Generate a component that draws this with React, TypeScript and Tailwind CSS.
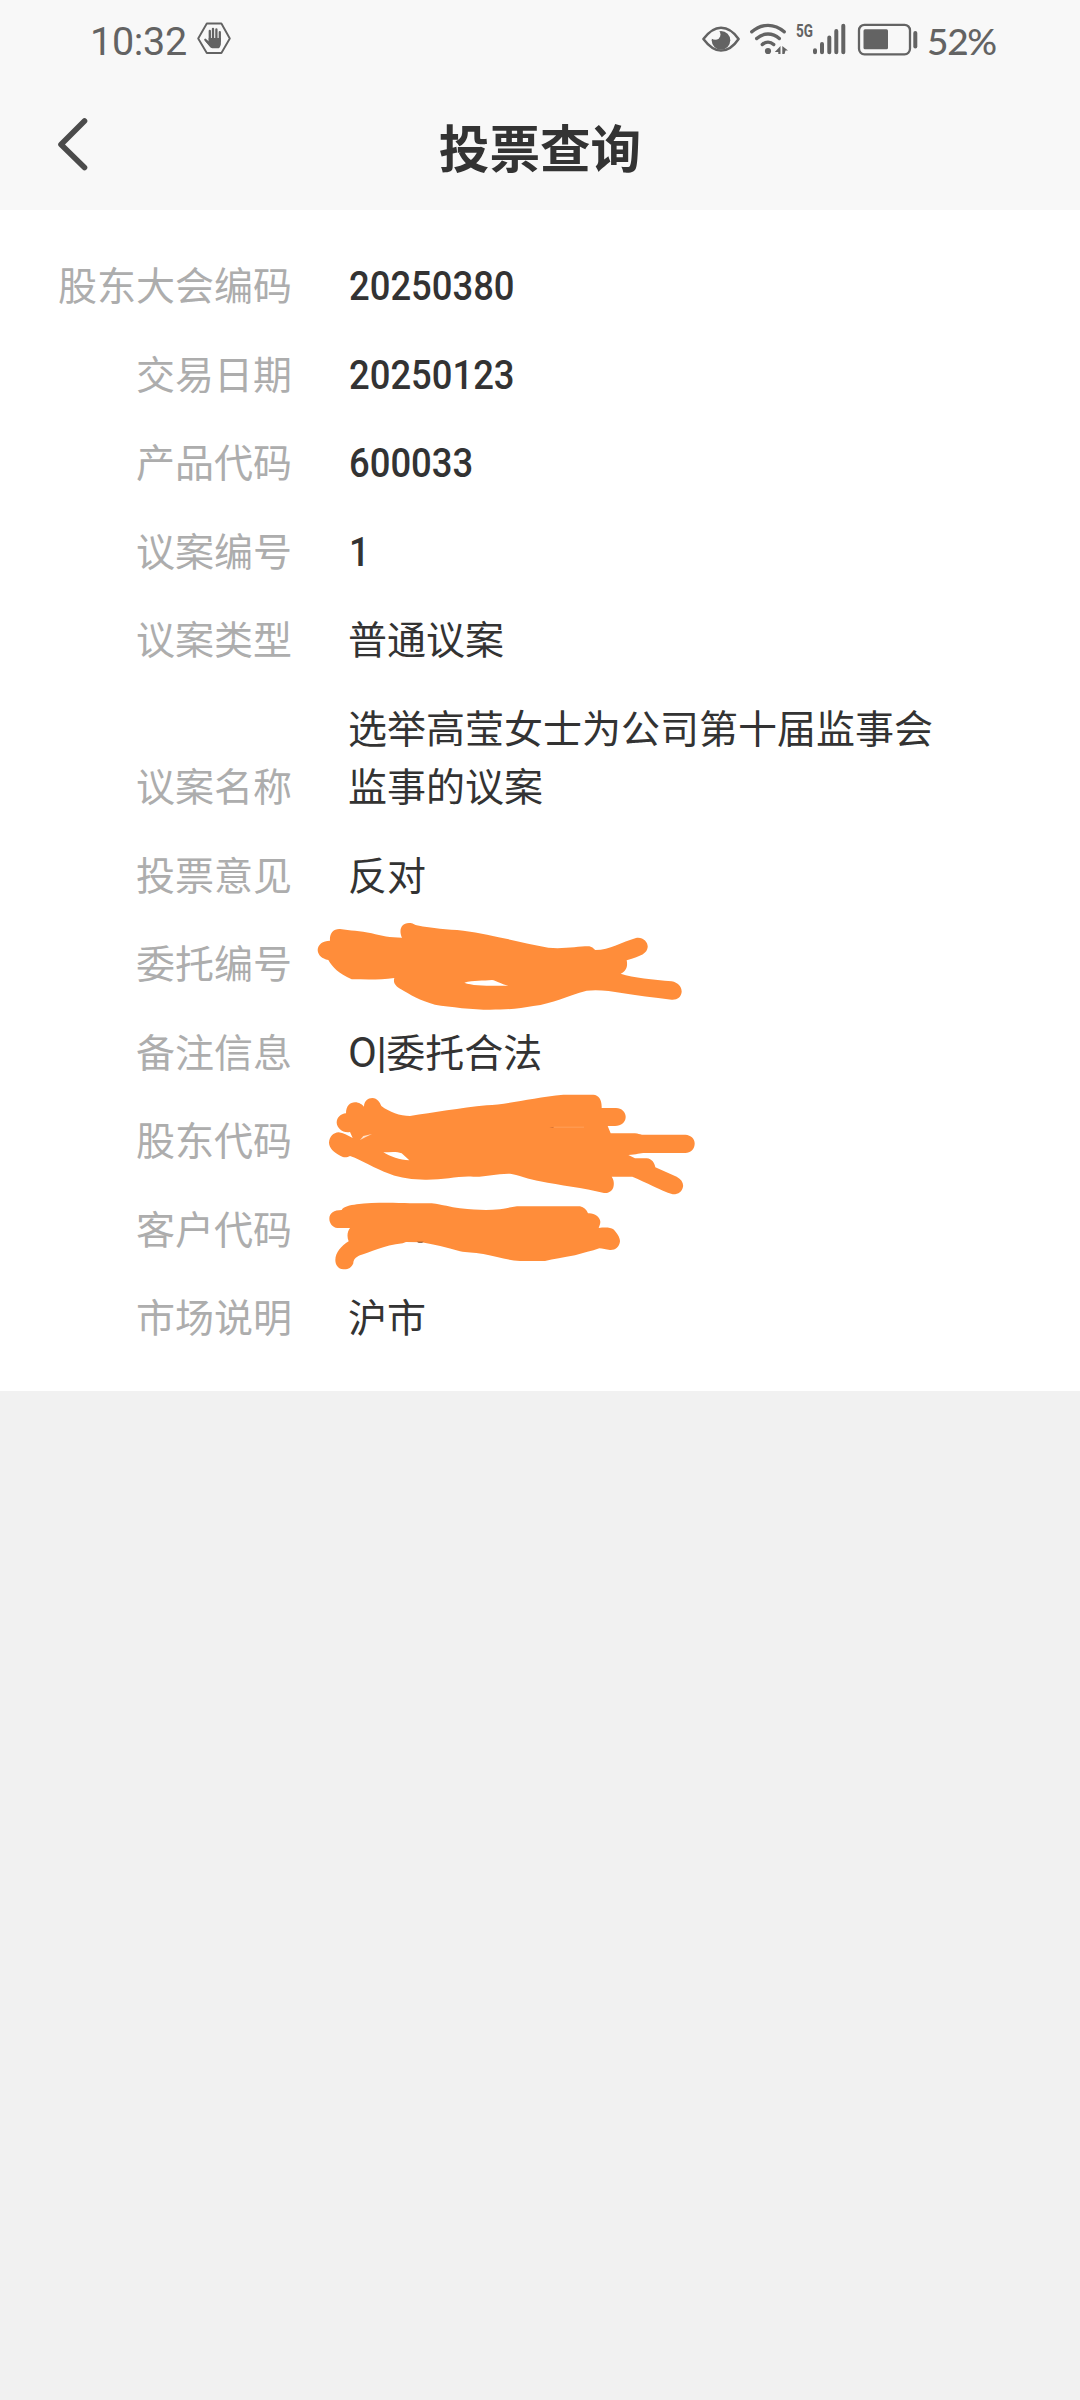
import React from 'react';

interface Row {
  label: string;
  value?: string;
  prefix?: string;
  numeric?: boolean;
}

const rows: Row[] = [
  { label: '股东大会编码', value: '20250380', numeric: true },
  { label: '交易日期', value: '20250123', numeric: true },
  { label: '产品代码', value: '600033', numeric: true },
  { label: '议案编号', value: '1', numeric: true },
  { label: '议案类型', value: '普通议案' },
  { label: '议案名称', value: '选举高莹女士为公司第十届监事会监事的议案' },
  { label: '投票意见', value: '反对' },
  { label: '委托编号' },
  { label: '备注信息', prefix: 'O|', value: '委托合法' },
  { label: '股东代码' },
  { label: '客户代码' },
  { label: '市场说明', value: '沪市' },
];

function HandIcon() {
  return (
    <svg className="-mt-[3px] ml-[9px] h-[33px] w-[34px]" viewBox="0 0 34 33" fill="none">
      <path d="M9.800 1.500h14.600L32.800 16.500l-8.400 14.500H9.800L1.200 16.500z" stroke="#636363" strokeWidth="1.900" strokeLinejoin="round" />
      <g stroke="#636363" strokeLinecap="round" strokeWidth="2.300">
        <path d="M12.800 9V19M16 6.800V18M19.400 7.500V18M22.800 10.200V19" />
        <path d="M8.300 17.800L12.500 22" />
      </g>
      <path d="M11.700 16h12.200v5.700c0 1.500-.6 2.400-1 3.200c-.4.800-1 1.300-2 1.300h-5.500c-1.200 0-2-.6-2.600-1.400L8.300 19.200l2-.6 1.400 1z" fill="#636363" />
    </svg>
  );
}

function StatusIcons() {
  return (
    <svg className="h-[40px] w-[220px]" viewBox="0 0 220 40" fill="none">
      {/* eye */}
      <circle cx="21" cy="20.300" r="9.300" fill="#636363" />
      <circle cx="15.300" cy="14.500" r="5.200" fill="#f8f8f8" />
      <path d="M3.400 19C9 11.500 15 7.700 21 7.700S33.500 11.500 38.600 19C33.500 26.500 27 30.600 21 30.600S9 26.500 3.400 19z" stroke="#636363" strokeWidth="2.500" strokeLinejoin="round" />
      {/* wifi */}
      <g stroke="#636363" strokeWidth="3.400" strokeLinecap="round">
        <path d="M51.800 11.800C61.500 3.200 74.500 3.200 84.200 11.800" />
        <path d="M56.700 18.500C63.500 12.400 72.500 12.400 79.300 18.500" />
        <path d="M62.300 24.500C65.800 21.300 70.200 21.300 73.700 24.500" />
      </g>
      <circle cx="68" cy="31" r="3.100" fill="#636363" />
      <path d="M80.500 26V34h-2.200V32h-3.500zM82.300 26L88 30.500H85.500L84.500 34h-2.200z" fill="#636363" />
      {/* signal */}
      <g stroke="#636363" strokeWidth="4" strokeLinecap="round">
        <path d="M115 30.300V32.200M122 24V32.200M129.300 17.500V32.200M136.300 11V32.200M143.300 5.700V32.200" />
      </g>
      {/* battery */}
      <rect x="159" y="4.800" width="51" height="29.500" rx="5.500" stroke="#636363" strokeWidth="2.300" />
      <rect x="163.500" y="9.300" width="24.500" height="20" rx="1.500" fill="#636363" />
      <path d="M215.300 13V26.500" stroke="#636363" strokeWidth="4" strokeLinecap="round" />
    </svg>
  );
}

// Marker strokes covering the private values
function Scribbles() {
  return (
    <>
      <svg className="absolute left-[300px] top-[690px] h-[130px] w-[420px]" viewBox="0 0 1260 390" fill="#ff8d3a">
        <path
          fillRule="evenodd"
          d="M53 150C54 133 68 122 90 122C88 100 100 86 120 87C150 92 180 92 215 100C245 108 270 113 306 113C296 92 302 70 327 69C340 69 342 74 350 76C400 86 440 88 490 92C580 104 660 128 745 143C790 148 840 138 868 139C878 141 880 146 886 150C930 150 965 126 1008 114C1030 110 1045 128 1043 142C1041 160 1025 168 980 181C984 200 978 214 962 221C1000 234 1060 238 1115 244C1135 248 1146 262 1145 276C1143 292 1132 300 1115 299C1060 293 1010 286 965 279C930 272 890 268 860 272C800 288 760 310 700 318C660 326 620 329 570 329C520 329 450 321 405 314C360 302 330 284 303 268C285 258 279 248 283 234C240 240 200 238 155 238C115 220 98 202 85 180C66 176 54 166 53 150ZM493 248C520 240 550 243 576 240C590 242 602 252 625 257C580 257 520 259 493 248Z"
        />
      </svg>
      <svg className="absolute left-[300px] top-[860px] h-[220px] w-[420px]" viewBox="0 0 1260 660" fill="#ff8d3a">
        <path
          fillRule="evenodd"
          d="M110 158C110 142 122 132 138 130C138 108 150 97 165 97C178 97 186 104 192 110C192 94 204 84 217 84C232 84 240 98 244 108C268 126 300 138 330 138C400 128 480 114 560 106C620 104 700 82 790 74H880C896 75 906 88 905 114H948C966 114 978 128 977 142C976 158 964 168 945 168H923L932 190H1005C1015 190 1018 194 1026 194H1156C1174 195 1185 208 1184 222C1183 238 1172 249 1156 249H1035C1020 249 1010 254 985 255L1005 265H1040C1056 266 1064 280 1066 292L1130 320C1145 328 1151 340 1149 350C1147 364 1134 374 1118 373C1080 360 1040 338 997 320H935C942 330 942 340 941 347C939 362 926 370 912 369C850 354 780 346 720 334C690 328 650 314 630 311C590 310 560 321 520 320C480 316 430 330 375 329C340 329 300 324 270 312C220 294 190 272 150 258C142 262 132 264 122 258C100 246 88 234 87 218C88 200 100 188 116 187C130 188 142 196 158 204L150 186C128 190 111 174 110 158ZM250 247C270 247 290 244 305 250L328 271C300 270 270 260 250 247Z"
        />
        <path d="M180 210L190 198L216 192L196 202Z" fill="#ffe0c8" />
        <path d="M762 170H852V173H762Z" fill="#ffa05a" />
        <path d="M748 172L758 171L762 174Z" fill="#c96f35" />
        <path d="M88 446C88 430 102 420 125 420C130 410 150 406 170 403C220 397 280 398 330 400H395C430 404 450 412 480 415C530 420 560 421 600 418C620 415 640 409 660 409H840C852 411 860 420 864 430C882 428 900 440 901 455C901 462 898 468 896 474C915 472 932 472 940 478C950 488 960 502 960 514C958 532 945 541 930 540C918 539 908 535 898 535C875 544 850 548 825 556C790 562 760 568 735 573H660C620 570 590 560 550 552C520 548 500 548 480 544C440 532 400 524 365 517L318 516L308 520C250 526 210 548 180 556C166 562 160 570 160 580C154 594 144 599 130 598C114 597 106 584 106 570C106 548 124 528 146 514C140 500 142 484 150 474H112C98 472 88 460 88 446Z" />
        <path d="M350 515.500H371L366 518H356Z" fill="#7a4a28" />
      </svg>
    </>
  );
}

export default function App() {
  return (
    <div className="flex h-[2400px] w-[1080px] flex-col overflow-hidden bg-[#f1f1f1] font-['Noto_Sans_CJK_SC',sans-serif]">
      <header className="h-[210px] bg-[#f8f8f8]">
        {/* Status bar */}
        <div className="flex h-[80px] items-center justify-between pl-[90px] pr-[83px] font-[Roboto,sans-serif] text-[#636363]">
          <div className="flex items-center">
            <span className="w-[98px] pt-[3px] text-[39.500px] leading-[40px] tracking-[-0.300px]">10:32</span>
            <HandIcon />
          </div>
          <div className="relative flex items-center">
            <StatusIcons />
            <span className="absolute left-[96px] top-[1px] origin-left scale-x-75 text-[18px] font-bold leading-[20px]">5G</span>
            <span className="ml-[7px] w-[70px] pt-[1px] font-[Lato,sans-serif] text-[37px] font-medium leading-[40px] tracking-[-1.300px]">52%</span>
          </div>
        </div>

        {/* Title bar */}
        <div className="flex h-[130px] items-center px-[56px]">
          <svg className="-mt-[2px] h-[56px] w-[34px]" viewBox="0 0 34 56" fill="none">
            <path d="M28.500 5L5 28.500L28.500 51.500" stroke="#4b4b4b" strokeWidth="5.600" strokeLinecap="round" strokeLinejoin="round" />
          </svg>
          <h1 className="mr-[34px] flex-1 pt-[1px] text-center text-[50.600px] font-bold leading-[60px] text-[#333333]">投票查询</h1>
        </div>
      </header>

      {/* Detail list */}
      <main className="relative flex h-[1181px] flex-col gap-[30px] bg-white pt-[44px] text-[39px] leading-[58.500px]">
        {rows.map((row) => (
          <div key={row.label} className="flex min-h-[58.500px] items-end">
            <span className="w-[292px] text-right text-[#adadad]">{row.label}</span>
            {row.numeric ? (
              <span className="-mb-[4px] ml-[57px] origin-left scale-x-[0.915] font-[Roboto,sans-serif] text-[39.800px] font-medium text-[#333333]">
                {row.value}
              </span>
            ) : (
              <span className="ml-[56px] w-[600px] text-[#333333]">
                {row.prefix && (
                  <span className="font-[Roboto,sans-serif] text-[42px] leading-none tracking-[-0.500px]">{row.prefix}</span>
                )}
                {row.value}
              </span>
            )}
          </div>
        ))}
        <Scribbles />
      </main>
    </div>
  );
}
